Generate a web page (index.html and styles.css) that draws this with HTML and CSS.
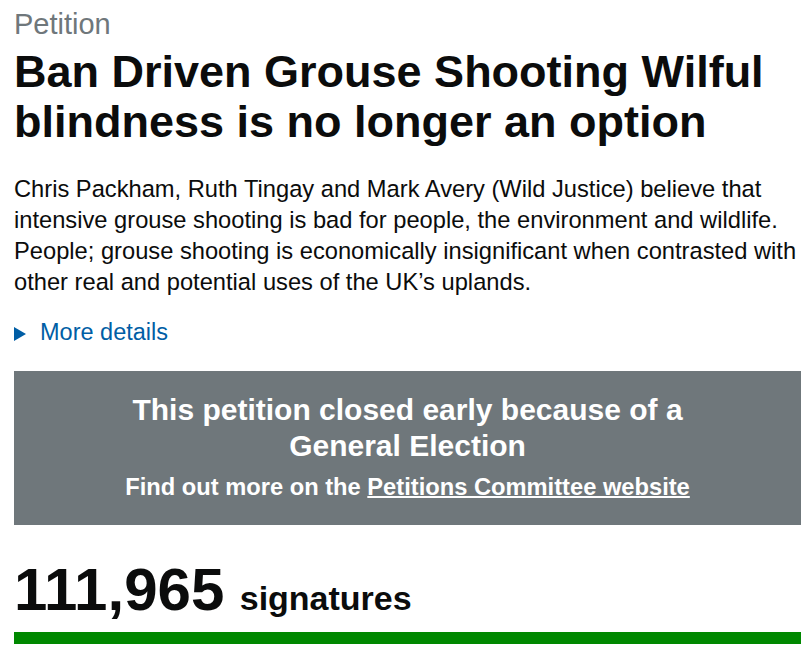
FILE: index.html
```html
<!DOCTYPE html>
<html lang="en-GB">
<head>
    <meta charset="UTF-8">
    <title>Ban Driven Grouse Shooting - Petitions</title>
    <link rel="stylesheet" href="styles.css">
</head>
<body>
    <main class="petition">
        <span class="caption">Petition</span>
        <h1>Ban Driven Grouse Shooting Wilful blindness is no longer an option</h1>

        <p class="summary">Chris Packham, Ruth Tingay and Mark Avery (Wild Justice) believe that intensive grouse shooting is bad for people, the environment and wildlife. People; grouse shooting is economically insignificant when contrasted with other real and potential uses of the UK’s uplands.</p>

        <details class="more">
            <summary>More details</summary>
        </details>

        <div class="closed-notice">
            <h2>This petition closed early because of a General Election</h2>
            <p>Find out more on the <a href="#">Petitions Committee website</a></p>
        </div>

        <div class="signatures">
            <span class="count">111,965</span> <span class="label">signatures</span>
        </div>
        <div class="progress"></div>
    </main>
</body>
</html>
```

FILE: styles.css
```css
body {
    font-family: 'Liberation Sans', Arial, sans-serif;
    background-color: #ffffff;
    color: #0b0c0c;
    margin: 0;
    padding: 0;
}
.petition {
    margin-left: 14px;
    width: 787px;
}
.caption {
    display: block;
    color: #6f777b;
    font-size: 29px;
    line-height: 34px;
    padding-top: 7px;
}
h1 {
    font-size: 45px;
    line-height: 50px;
    font-weight: 700;
    margin: 6px 0 27px 0;
}
.summary {
    font-size: 23.7px;
    line-height: 31px;
    margin: 0 0 19px 0;
}
.more summary {
    color: #005ea5;
    font-size: 23.5px;
    line-height: 30px;
    cursor: pointer;
    list-style: none;
}
.more summary::-webkit-details-marker {
    display: none;
}
.more summary::before {
    content: "";
    display: inline-block;
    width: 0;
    height: 0;
    border-style: solid;
    border-width: 7px 0 7px 12px;
    border-color: transparent transparent transparent #005ea5;
    margin-right: 14px;
    vertical-align: -1px;
}
.closed-notice {
    background-color: #6f777b;
    color: #ffffff;
    text-align: center;
    margin-top: 24px;
    padding: 21px 20px 24px;
}
.closed-notice h2 {
    font-size: 30px;
    line-height: 36px;
    margin: 0 auto 9px;
    max-width: 580px;
}
.closed-notice p {
    font-size: 23.7px;
    font-weight: 700;
    line-height: 28px;
    margin: 0;
}
.closed-notice a {
    color: #ffffff;
    text-decoration-thickness: 2px;
}
.signatures {
    margin-top: 30px;
    font-weight: 700;
    line-height: 1;
}
.count {
    font-size: 60px;
    line-height: 70px;
}
.label {
    font-size: 34px;
    margin-left: 11px;
}
.progress {
    height: 12px;
    background-color: #008800;
    margin-top: 7px;
}
```
